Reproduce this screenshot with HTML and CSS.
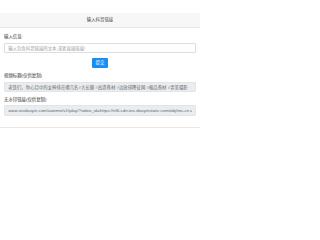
FILE: index.html
```html
<!DOCTYPE html>
<html lang="zh-CN">
<head>
<meta charset="utf-8">
<meta name="viewport" content="width=200">
<title>输入抖音链接</title>
<link rel="stylesheet" href="styles.css">
</head>
<body>
<div class="card">
  <div class="card-header">输入抖音链接</div>
  <div class="card-body">
    <div class="group">
      <label class="label">输入信息:</label>
      <input class="field" type="text" placeholder="输入包含抖音链接的文本,或者直接链接!">
    </div>
    <div class="actions"><button class="btn">提交</button></div>
    <div class="group">
      <label class="label">视频标题(仅供复制)</label>
      <input class="field readonly" type="text" readonly value="老铁们，你心目中的女神排在哪几名#大长腿 #高清卷材 #边放排降征网 #极品卷材 #耍美摄影">
    </div>
    <div class="group">
      <label class="label">无水印链接(仅供复制)</label>
      <input class="field readonly" type="text" readonly value="www.iesdouyin.com/aweme/v1/play/?video_id=https://nf6-cdn-tos.douyinstatic.com/obj/tos-cn-ve-15">
    </div>
  </div>
</div>
</body>
</html>
```
FILE: styles.css
```css
html, body {
  margin: 0;
  padding: 0;
  background: #ffffff;
}
body {
  font-family: "Liberation Sans", "Noto Sans CJK SC", sans-serif;
  font-size: 4.4px;
  color: #333333;
}
.card {
  width: 200px;
  margin-top: 13px;
  border-bottom: 0.7px solid #e8e8e8;
}
.card-header {
  background: #f7f7f7;
  border-bottom: 0.5px solid #e6e6e6;
  padding: 3.6px 4px;
  line-height: 6.6px;
  text-align: center;
  color: #444444;
}
.card-body {
  padding: 6.6px 4px 11.5px;
  display: flex;
  flex-direction: column;
}
.group {
  display: flex;
  flex-direction: column;
  gap: 2.2px;
}
.label {
  line-height: 6.6px;
  color: #333333;
}
.field {
  box-sizing: border-box;
  width: 100%;
  height: 10.3px;
  margin: 0;
  padding: 0 3.2px;
  border: 0.5px solid #dcdfe3;
  border-radius: 1px;
  font-family: inherit;
  font-size: 4.4px;
  color: #555555;
  background: #ffffff;
  outline: none;
}
.field::placeholder {
  color: #9a9a9a;
}
.field.readonly {
  background: #eaedf0;
  border-color: #e2e5e8;
  color: #666666;
}
.actions {
  display: flex;
  justify-content: center;
  margin: 4.4px 0 5.2px;
}
.btn {
  height: 10px;
  padding: 0 3.4px;
  margin: 0;
  border: 0;
  border-radius: 1px;
  background: #1a8cf5;
  color: #ffffff;
  font-family: inherit;
  font-size: 4.4px;
  line-height: 10px;
}
.group + .group {
  margin-top: 4.4px;
}
```
